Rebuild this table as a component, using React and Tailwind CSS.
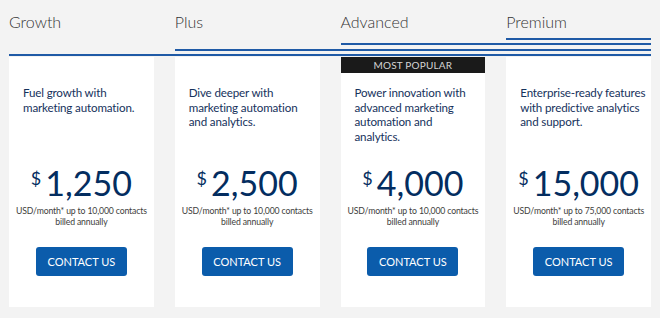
export default function App() {
  const plans = [
    {
      name: "Growth",
      desc: ["Fuel growth with", "marketing automation."],
      price: "1,250",
      note: "USD/month* up to 10,000 contacts",
      line: "w-[calc(400%+63px)]",
      pb: "pb-[1px]",
    },
    {
      name: "Plus",
      desc: ["Dive deeper with", "marketing automation", "and analytics."],
      price: "2,500",
      note: "USD/month* up to 10,000 contacts",
      line: "w-[calc(300%+42px)]",
      pb: "pb-[6px]",
    },
    {
      name: "Advanced",
      desc: ["Power innovation with", "advanced marketing", "automation and", "analytics."],
      price: "4,000",
      note: "USD/month* up to 10,000 contacts",
      line: "w-[calc(200%+21px)]",
      pb: "pb-[12px]",
      popular: true,
    },
    {
      name: "Premium",
      desc: ["Enterprise-ready features", "with predictive analytics", "and support."],
      price: "15,000",
      note: "USD/month* up to 75,000 contacts",
      line: "w-full",
      pb: "pb-[17px]",
    },
  ];

  return (
    <div className="w-[660px] h-[318px] bg-[#f3f3f3] overflow-hidden font-['Lato',sans-serif]">
      <div className="ml-[9px] w-[642px] grid grid-cols-4 gap-x-[21px]">
        {plans.map((p) => (
          <div key={p.name} className="flex flex-col">
            <div className={`h-[57px] flex flex-col justify-between pt-[12px] ${p.pb}`}>
              <div className="text-[16px] leading-[20px] font-light text-[#333333] whitespace-nowrap">
                {p.name}
              </div>
              <div className={`h-[2px] bg-[#1f5aa6] ${p.line}`}></div>
            </div>
            <div className="bg-white h-[250px] flex flex-col">
              {p.popular ? (
                <div className="h-[16px] bg-[#1a1a1a] text-[#d4d4d4] text-[10px] leading-[16px] text-center tracking-[0.2px]">
                  MOST POPULAR
                </div>
              ) : null}
              <div
                className={`${p.popular ? "pt-[13px] h-[90px]" : "pt-[29px] h-[106px]"} pl-[14px] text-[11.6px] leading-[14.5px] tracking-[-0.15px] text-[#16325c]`}
              >
                {p.desc.map((l) => (
                  <div key={l} className="whitespace-nowrap">{l}</div>
                ))}
              </div>
              <div className="flex justify-center items-start text-[#032d60]">
                <span className="text-[18px] leading-[20px] mt-[5px] mr-[4px]">$</span>
                <span className="text-[34px] leading-[40px]">{p.price}</span>
              </div>
              <div className="mt-[2px] text-center text-[8.7px] leading-[11px] tracking-[-0.15px] text-[#3e3e3c]">
                <div className="whitespace-nowrap">{p.note}</div>
                <div>billed annually</div>
              </div>
              <div className="mt-[20px] flex justify-center">
                <button className="w-[91px] h-[29px] rounded-[3px] bg-[#0b5cab] text-white text-[11px] leading-none">
                  CONTACT US
                </button>
              </div>
            </div>
          </div>
        ))}
      </div>
    </div>
  );
}
